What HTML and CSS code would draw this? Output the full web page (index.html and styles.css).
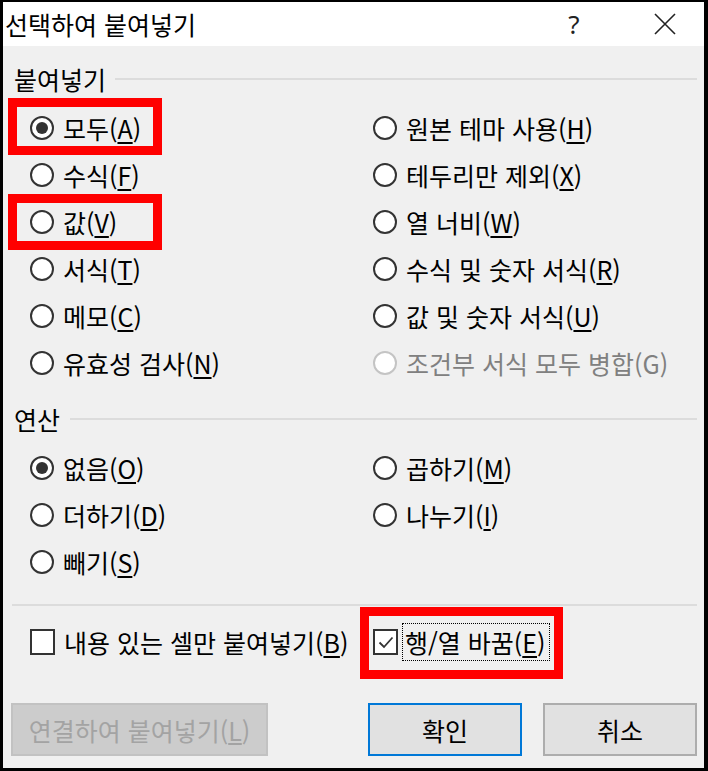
FILE: index.html
```html
<!DOCTYPE html>
<html lang="ko">
<head>
  <meta charset="UTF-8">
  <meta name="viewport" content="width=device-width, initial-scale=1.0">
  <title>선택하여 붙여넣기</title>
  <link rel="stylesheet" href="styles.css">
</head>
<body>
  <div class="dialog">
    <div class="titlebar">
      <span class="title">선택하여 붙여넣기</span>
      <span class="tb-btn help">?</span>
      <span class="tb-btn close">
        <svg width="22" height="22" viewBox="0 0 22 22">
          <path d="M1 1 L21 21 M21 1 L1 21" stroke="#222" stroke-width="1.6" fill="none"/>
        </svg>
      </span>
    </div>

    <div class="content">
      <div class="group-label"><span>붙여넣기</span><div class="rule"></div></div>
      <div class="options">
        <label class="option mark mark-all"><span class="radio checked"></span><span>모두(<u>A</u>)</span></label>
        <label class="option"><span class="radio"></span><span>원본 테마 사용(<u>H</u>)</span></label>
        <label class="option"><span class="radio"></span><span>수식(<u>F</u>)</span></label>
        <label class="option"><span class="radio"></span><span>테두리만 제외(<u>X</u>)</span></label>
        <label class="option mark mark-value"><span class="radio"></span><span>값(<u>V</u>)</span></label>
        <label class="option"><span class="radio"></span><span>열 너비(<u>W</u>)</span></label>
        <label class="option"><span class="radio"></span><span>서식(<u>T</u>)</span></label>
        <label class="option"><span class="radio"></span><span>수식 및 숫자 서식(<u>R</u>)</span></label>
        <label class="option"><span class="radio"></span><span>메모(<u>C</u>)</span></label>
        <label class="option"><span class="radio"></span><span>값 및 숫자 서식(<u>U</u>)</span></label>
        <label class="option"><span class="radio"></span><span>유효성 검사(<u>N</u>)</span></label>
        <label class="option disabled"><span class="radio"></span><span>조건부 서식 모두 병합(G)</span></label>
      </div>

      <div class="group-label op-label"><span>연산</span><div class="rule"></div></div>
      <div class="options">
        <label class="option"><span class="radio checked"></span><span>없음(<u>O</u>)</span></label>
        <label class="option"><span class="radio"></span><span>곱하기(<u>M</u>)</span></label>
        <label class="option"><span class="radio"></span><span>더하기(<u>D</u>)</span></label>
        <label class="option"><span class="radio"></span><span>나누기(<u>I</u>)</span></label>
        <label class="option"><span class="radio"></span><span>빼기(<u>S</u>)</span></label>
      </div>

      <div class="separator"></div>

      <div class="options check-row">
        <label class="option"><span class="checkbox"></span><span>내용 있는 셀만 붙여넣기(<u>B</u>)</span></label>
        <label class="option mark mark-transpose">
          <span class="checkbox checked">
            <svg width="20" height="20" viewBox="0 0 20 20">
              <path d="M3.5 10.5 L8 15 L16.5 5.5" stroke="#333" stroke-width="1.8" fill="none"/>
            </svg>
          </span>
          <span class="focus">행/열 바꿈(<u>E</u>)</span>
        </label>
      </div>

      <div class="buttons">
        <button class="btn btn-link" disabled>연결하여 붙여넣기(<u>L</u>)</button>
        <button class="btn btn-ok">확인</button>
        <button class="btn">취소</button>
      </div>
    </div>
  </div>
</body>
</html>
```

FILE: styles.css
```css
html, body {
  margin: 0;
  height: 100%;
}

body {
  background-color: #000;
  padding: 2px 4px 3px 3px;
  box-sizing: border-box;
  font-family: "Noto Sans CJK KR", "Noto Sans", sans-serif;
  color: #000;
}

.dialog {
  background-color: #f0f0f0;
  height: 766px;
  display: flex;
  flex-direction: column;
}

.titlebar {
  height: 44px;
  background-color: #fff;
  display: flex;
  align-items: center;
  padding: 0 16px 0 2px;
}

.title {
  font-size: 25px;
  line-height: 44px;
}

.tb-btn {
  width: 46px;
  height: 44px;
  display: flex;
  align-items: center;
  justify-content: center;
}

.help {
  margin-left: auto;
  margin-right: 45px;
  font-family: "Noto Sans", sans-serif;
  font-size: 26px;
  color: #222;
}

.content {
  flex: 1;
  padding: 0 7px 12px 9px;
  display: flex;
  flex-direction: column;
}

.group-label {
  display: flex;
  align-items: center;
  height: 24px;
  margin-top: 21px;
  font-size: 25px;
  padding-left: 2px;
}

.group-label .rule {
  flex: 1;
  height: 2px;
  background-color: #dcdcdc;
  margin-left: 9px;
}

.op-label {
  margin-top: 20.5px;
}

.op-label .rule {
  margin-left: 10px;
}

.options {
  display: grid;
  grid-template-columns: 343px 1fr;
  grid-auto-rows: 47px;
  padding-left: 18px;
  margin-top: 13.5px;
}

.option {
  display: flex;
  align-items: center;
  gap: 9px;
  font-size: 25px;
  white-space: nowrap;
}

.option u {
  text-underline-offset: 3px;
}

.radio {
  width: 24px;
  height: 24px;
  box-sizing: border-box;
  border: 2px solid #333;
  border-radius: 50%;
  background-color: #fff;
  display: flex;
  align-items: center;
  justify-content: center;
  flex-shrink: 0;
}

.radio.checked::after {
  content: '';
  width: 12px;
  height: 12px;
  border-radius: 50%;
  background-color: #333;
}

.option.disabled {
  color: #808080;
}

.option.disabled .radio {
  border-color: #c4c4c4;
}

.checkbox {
  width: 25px;
  height: 26px;
  box-sizing: border-box;
  border: 2px solid #333;
  background-color: #fff;
  display: flex;
  align-items: center;
  justify-content: center;
  flex-shrink: 0;
}

.focus {
  border: 1px dotted #000;
  padding: 2px 4px 2px 2px;
  line-height: 32px;
  margin-left: -5px;
}

.separator {
  height: 2px;
  background-color: #dcdcdc;
  margin-top: 18.5px;
}

.check-row {
  margin-top: 12.5px;
}

/* red annotation boxes */
.mark {
  position: relative;
}

.mark::after {
  content: '';
  position: absolute;
  border: 9px solid #ff0000;
  box-sizing: border-box;
}

.mark-all::after {
  left: -22px;
  top: -6.5px;
  width: 154px;
  height: 57px;
}

.mark-value::after {
  left: -22px;
  top: -4.5px;
  width: 154px;
  height: 56px;
}

.mark-transpose::after {
  left: -13px;
  top: -11.5px;
  width: 203px;
  height: 72px;
}

.buttons {
  display: flex;
  gap: 21px;
  margin-top: 37.5px;
}

.btn {
  height: 53px;
  width: 154px;
  font-family: "Noto Sans CJK KR", "Noto Sans", sans-serif;
  font-size: 25px;
  color: #000;
  background-color: #e1e1e1;
  border: 2px solid #adadad;
  padding: 0;
}

.btn-link {
  width: 257px;
  margin-left: -1px;
  background-color: #cccccc;
  border: 2px solid #c2c2c2;
  color: #a3a3a3;
}

.btn-ok {
  margin-left: auto;
  border-color: #0078d7;
}
```
